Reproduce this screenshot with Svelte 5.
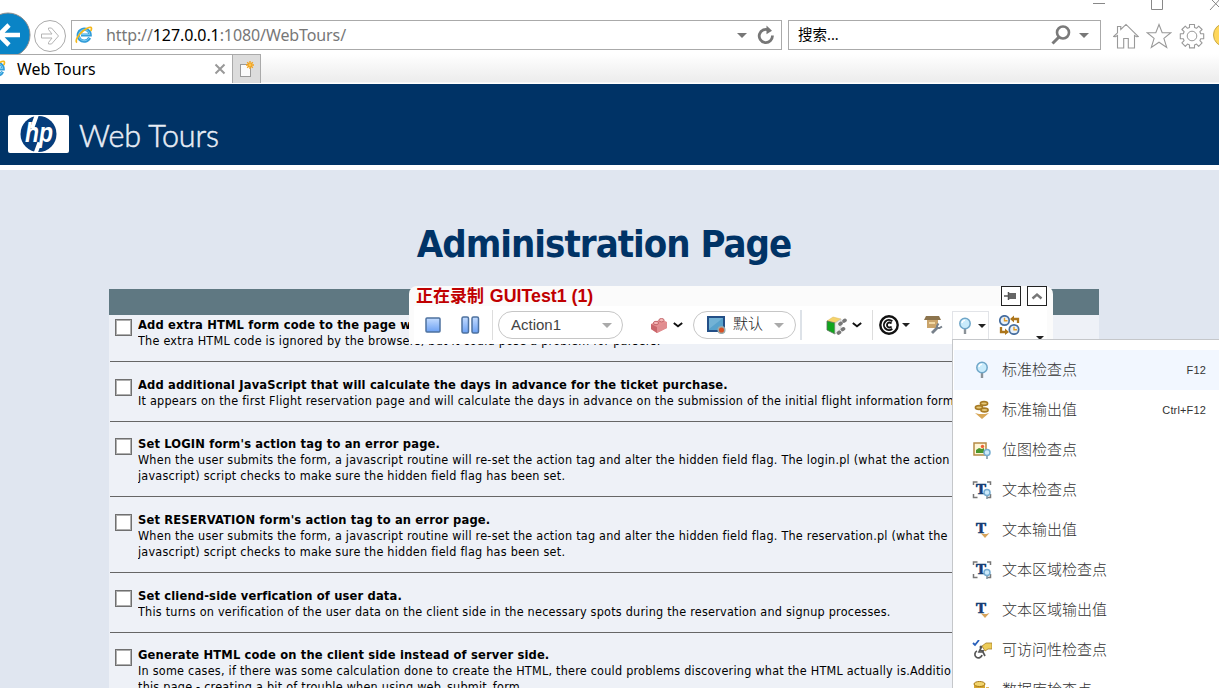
<script>
  const options = [
    { title: 'Add extra HTML form code to the page w', lines: ['The extra HTML code is ignored by the browsers, but it could pose a problem for parsers.'] },
    { title: 'Add additional JavaScript that will calculate the days in advance for the ticket purchase.', lines: ['It appears on the first Flight reservation page and will calculate the days in advance on the submission of the initial flight information form'] },
    { title: "Set LOGIN form's action tag to an error page.", lines: ['When the user submits the form, a javascript routine will re-set the action tag and alter the hidden field flag. The login.pl (what the action', 'javascript) script checks to make sure the hidden field flag has been set.'] },
    { title: "Set RESERVATION form's action tag to an error page.", lines: ['When the user submits the form, a javascript routine will re-set the action tag and alter the hidden field flag. The reservation.pl (what the', 'javascript) script checks to make sure the hidden field flag has been set.'] },
    { title: 'Set cliend-side verfication of user data.', lines: ['This turns on verification of the user data on the client side in the necessary spots during the reservation and signup processes.'] },
    { title: 'Generate HTML code on the client side instead of server side.', lines: ['In some cases, if there was some calculation done to create the HTML, there could problems discovering what the HTML actually is.Additio', 'this page - creating a bit of trouble when using web_submit_form.'] }
  ];
  const menu = [
    { icon: 'pin', label: '标准检查点', key: 'F12' },
    { icon: 'coins', label: '标准输出值', key: 'Ctrl+F12' },
    { icon: 'bitmap', label: '位图检查点' },
    { icon: 'textcheck', label: '文本检查点' },
    { icon: 'textout', label: '文本输出值' },
    { icon: 'textcheck', label: '文本区域检查点' },
    { icon: 'textout', label: '文本区域输出值' },
    { icon: 'access', label: '可访问性检查点' },
    { icon: 'db', label: '数据库检查点' }
  ];
</script>

{#snippet ie()}
  <svg class="ie" width="18" height="18" viewBox="0 0 18 18">
    <path d="M14.600 11.800A6 6 0 1 1 15.200 9H6" fill="none" stroke="#2f9bd8" stroke-width="3.200" />
    <path d="M14.200 11.800A5.600 5.600 0 1 1 14.800 8.600H6" fill="none" stroke="#7ccdf3" stroke-width="1" />
    <path d="M2 16.600C-.5 15 3.500 8.500 8 5s8.500-5 8.500-2.500c0 1-.3 1.800-.8 2.700" fill="none" stroke="#f4b81c" stroke-width="1.700" />
  </svg>
{/snippet}

{#snippet pin()}
  <path d="M9 11v6" stroke="#8b9298" stroke-width="2.400" />
  <circle cx="9" cy="6.500" r="5.200" fill="#c9ebfb" stroke="#6fa6c8" stroke-width="1.500" />
  <path d="M6 6a3 3 0 0 1 3-2.600" stroke="#fff" stroke-width="1.400" fill="none" />
{/snippet}

{#snippet chevron()}
  <svg width="10" height="6" viewBox="0 0 10 6"><path d="M.8 1 5 4.300 9.200 1" fill="none" stroke="#111" stroke-width="1.900" /></svg>
{/snippet}

{#snippet smallpin()}
  <path d="M14 14v4" stroke="#8196a2" stroke-width="1.600" />
  <circle cx="14" cy="11.500" r="3" fill="#cdeafa" stroke="#75acd0" stroke-width="1.500" />
{/snippet}

<div class="page">
  <header class="chrome">
    <div class="toolbar">
      <svg class="back" width="31" height="54" viewBox="0 0 31 54">
        <circle cx="8" cy="35" r="22" fill="#0a84c6" stroke="#8b8b8b" />
        <path d="M20 35H1M9 25-1 35l10 10" fill="none" stroke="#fff" stroke-width="4.600" />
      </svg>
      <svg class="forward" width="34" height="34" viewBox="0 0 34 34">
        <circle cx="17" cy="17" r="15.500" fill="#fff" stroke="#aaa" />
        <path d="M8.500 15H19l-3.500-4.500V9h3l7 8-7 8h-3v-1.500L19 19H8.500z" fill="none" stroke="#b4b4b4" />
      </svg>
      <div class="address">
        {@render ie()}
        <span class="url">http://<b>127.0.0.1</b>:1080/WebTours/</span>
        <i class="down"></i>
        <svg class="reload" width="18" height="20" viewBox="0 0 18 20">
          <path d="M15.400 10.500A6.600 6.600 0 1 1 12 5.200" fill="none" stroke="#777" stroke-width="2.800" />
          <path d="M9.500.500 15 5.700 9.500 9.200z" fill="#777" />
        </svg>
      </div>
      <div class="search">
        <span>搜索...</span>
        <svg width="20" height="20" viewBox="0 0 20 20"><circle cx="12" cy="7.500" r="6" fill="none" stroke="#7a7a7a" stroke-width="2.600" /><path d="M8 12l-6.500 6.500" stroke="#7a7a7a" stroke-width="3" /></svg>
        <i class="down"></i>
      </div>
      <div class="tools">
        <svg width="26" height="26" viewBox="0 0 26 26"><path d="M.7 13.500 4.500 9.800V3.500h3.300v3L13 1.400l12.300 12.100-1.800.2-2-1.200V25h-6.200v-9.500h-4.600V25H4.500V12.500l-2 1.200z" fill="none" stroke="#999" stroke-width="1.100" /></svg>
        <svg width="26" height="26" viewBox="0 0 26 26"><path d="m13 1.500 3.200 8.300h8.600l-6.900 5.600 2.800 9L13 19.200l-7.700 5.200 2.800-9-6.900-5.600h8.600z" fill="none" stroke="#999" stroke-width="1.100" /></svg>
        <svg width="26" height="26" viewBox="0 0 26 26"><path d="M10.500 1.500h5v3l2 .8 2.200-2.200 3.400 3.400-2.200 2.200.8 2h3v5h-3l-.8 2 2.200 2.200-3.400 3.400-2.200-2.200-2 .8v3h-5v-3l-2-.8-2.200 2.200-3.400-3.400 2.200-2.200-.8-2h-3v-5h3l.8-2-2.200-2.200 3.400-3.400 2.200 2.200 2-.8z" fill="none" stroke="#999" stroke-width="1.100" stroke-linejoin="round" /><circle cx="13" cy="13" r="4.800" fill="none" stroke="#999" /></svg>
        <i class="smile"></i>
      </div>
      <svg class="window" width="130" height="12" viewBox="0 0 130 12"><path d="M4 3.500h12M62.500-2v11.500h11V-2M121-2l11 11M121 10l11-12" fill="none" stroke="#888" /></svg>
    </div>
    <div class="tabs">
      <div class="tab">
        {@render ie()}
        <span>Web Tours</span>
        <svg width="12" height="12" viewBox="0 0 12 12"><path d="m1.500 1.500 9 9m0-9-9 9" stroke="#999" stroke-width="2" /></svg>
      </div>
      <div class="newtab">
        <svg width="16" height="18" viewBox="0 0 16 18"><rect x="1.500" y="4.500" width="10" height="12" fill="#fafafa" stroke="#999" /><path d="M11 1v8M7 5h8M8.200 2.200l5.600 5.600M13.800 2.200 8.200 7.800" stroke="#f2a31d" stroke-width="1.400" /><circle cx="11" cy="5" r="1.400" fill="#ffc44a" /></svg>
      </div>
    </div>
  </header>

  <div class="banner">
    <svg width="62" height="38" viewBox="0 0 62 38">
      <rect width="61" height="38" rx="2" fill="#fff" />
      <circle cx="30.500" cy="19" r="18" fill="#063d7c" />
      <path d="m29-.5-5 14M27.500 38.500l4-11" stroke="#fff" stroke-width="4" />
      <text x="17" y="27" font-family="Liberation Sans" font-size="28" font-weight="bold" font-style="italic" fill="#fff" textLength="28" lengthAdjust="spacingAndGlyphs">hp</text>
    </svg>
    <span>Web Tours</span>
  </div>

  <main>
    <h1>Administration Page</h1>
    <div class="table">
      <div class="thead"></div>
      {#each options as option}
        <div class="option">
          <span class="box"></span>
          <div class="copy">
            <b>{option.title}</b>
            {#each option.lines as line}<p>{line}</p>{/each}
          </div>
        </div>
      {/each}
    </div>
  </main>

  <section class="recorder">
    <div class="rec-head">
      <strong>正在录制 <em>GUITest1 (1)</em></strong>
      <span class="rec-btn"><svg width="14" height="10" viewBox="0 0 14 10"><path d="M0 5h4M4.500 1v8" stroke="#555" stroke-width="1.500" /><rect x="5" y="2" width="7" height="6" fill="#666" /></svg></span>
      <span class="rec-btn"><svg width="12" height="8" viewBox="0 0 12 8"><path d="m1.500 6.500 4.500-4 4.500 4" fill="none" stroke="#777" stroke-width="2.400" /></svg></span>
    </div>
    <div class="rec-body">
      <svg class="stop" width="16" height="16" viewBox="0 0 16 16"><defs><linearGradient id="blue" x2="0" y2="1"><stop stop-color="#c4dcff" /><stop offset="1" stop-color="#6ba0f3" /></linearGradient></defs><rect x="1" y="1" width="14" height="14" rx="1" fill="url(#blue)" stroke="#4d719f" stroke-width="1.500" /></svg>
      <svg class="pause" width="19" height="18" viewBox="0 0 19 18"><rect x="1" y="1" width="6.500" height="16" rx="1.500" fill="url(#blue)" stroke="#4d719f" stroke-width="1.500" /><rect x="11" y="1" width="6.500" height="16" rx="1.500" fill="url(#blue)" stroke="#4d719f" stroke-width="1.500" /></svg>
      <i class="sep s1"></i>
      <div class="pill action"><span>Action1</span><i class="down"></i></div>
      <svg class="brick" width="18" height="17" viewBox="0 0 18 17"><path d="m1 7 10-5 6 3v6L7 16l-6-4z" fill="#e58f91" /><path d="m1 7 6 3v6l-6-4z" fill="#c9666b" /><path d="M7 10v6l10-5V5z" fill="#e08d90" /><ellipse cx="6" cy="6" rx="2.600" ry="1.700" fill="#f4b7b7" stroke="#c4686c" /><ellipse cx="11.500" cy="3.200" rx="2.600" ry="1.700" fill="#f4b7b7" stroke="#c4686c" /></svg>
      <span class="chev c1">{@render chevron()}</span>
      <div class="pill mode">
        <svg width="20" height="18" viewBox="0 0 20 18"><rect x="1" y="1" width="16" height="14" fill="#58a2cc" stroke="#234f87" stroke-width="2" /><path d="M2 2h14L2 13z" fill="#83bddb" opacity=".6" /><circle cx="14.500" cy="14" r="3.300" fill="#d95124" stroke="#9aa" stroke-width="1.500" /></svg>
        <span>默认</span><i class="down"></i>
      </div>
      <i class="sep wide s2"></i>
      <svg class="cube" width="21" height="19" viewBox="0 0 21 19"><path d="m1 5 6-4 8 2-5 4z" fill="#f6d36a" stroke="#d9b65a" stroke-width=".5" /><path d="m1 5 8 2v11l-8-4z" fill="#11a51d" stroke="#59705a" stroke-width=".8" /><path d="m9 7 6-4v10l-6 5z" fill="#eee" stroke="#bbb" stroke-width=".7" /><path d="m14 8 1-.7M18 5l1-.7M12.500 17l1-.7M16.500 13.500l1-.7" stroke="#777" stroke-width="3.600" stroke-linecap="round" /></svg>
      <span class="chev c2">{@render chevron()}</span>
      <i class="sep s3"></i>
      <svg class="target" width="20" height="20" viewBox="0 0 20 20"><circle cx="10" cy="10" r="8.700" fill="none" stroke="#111" stroke-width="2.400" /><path d="M13.300 6.300a5 5 0 1 0 0 7.400M12.500 8.500a2.500 2.500 0 1 0 0 3" fill="none" stroke="#111" stroke-width="1.900" /></svg>
      <i class="down black d1"></i>
      <svg class="boxtool" width="19" height="18" viewBox="0 0 19 18"><path d="M2 0h13l2 4H0z" fill="#8c744d" /><path d="M3 4h11v8H3z" fill="#caa46b" /><path d="M5 6h6v2H5z" fill="#f1d8a5" /><path d="m8 17 6-6" stroke="#77808a" stroke-width="2.800" /><path d="M14.500 7.500 13 10v2h2.500l2.500-1.500" stroke="#77808a" stroke-width="2" fill="none" /></svg>
      <div class="checkbtn"><svg width="18" height="18" viewBox="0 0 18 18">{@render pin()}</svg><i class="down black"></i></div>
      <svg class="clocks" width="21" height="20" viewBox="0 0 21 20"><g fill="#e6f0fa" stroke="#476e9f" stroke-width="1.700"><circle cx="5.500" cy="5.500" r="4.700" /><circle cx="15" cy="14.500" r="4.700" /></g><path d="M5.500 2.800v3h3M15 11.800v3h3" stroke="#e39c24" stroke-width="1.400" fill="none" /><path d="M19 8V4h-5M2 12v5h5" stroke="#ad761b" stroke-width="2.300" fill="none" /><path d="m15 .5-4 3.500 4 3.500zM6 13.500l4 3.500-4 3z" fill="#ad761b" /></svg>
      <i class="down black more"></i>
    </div>
  </section>

  <nav class="menu">
    {#each menu as item, i}
      <div class="item" class:active={i === 0}>
        <svg width="20" height="20" viewBox="-1 -1 20 20">
          {#if item.icon === 'pin'}
            {@render pin()}
          {:else if item.icon === 'coins'}
            <g fill="#e6c878" stroke="#a77b26" stroke-width="1.600"><ellipse cx="11" cy="2.500" rx="3.600" ry="1.900" /><ellipse cx="6" cy="6.500" rx="3.600" ry="1.900" /><ellipse cx="11.500" cy="9" rx="3.600" ry="1.900" /></g><path d="m2 12 4 1h6l4-1-7 6z" fill="#d8a756" />
          {:else if item.icon === 'bitmap'}
            <rect x="1" y="2" width="12" height="12" fill="#fff5d5" stroke="#b58b46" stroke-width="1.500" /><path d="M3 11V9l3-2 3 1 2-1v5H3z" fill="#49962c" /><circle cx="9.500" cy="5.500" r="1.700" fill="#ef6338" />{@render smallpin()}
          {:else if item.icon === 'textcheck'}
            <path d="M.5 4V1h4M14 1h3.500v3M.5 13v3.500h4M14 16.500h3.500V13" fill="none" stroke="#777" stroke-width="1.500" /><text x="3" y="12.500" class="tee">T</text>{@render smallpin()}
          {:else if item.icon === 'textout'}
            <text x="3" y="12" class="tee">T</text><path d="m7.500 12 3 1h3l3-1-4.500 5z" fill="#d8a45a" />
          {:else if item.icon === 'access'}
            <path d="m0 2 2 2 4-5" fill="none" stroke="#285fba" stroke-width="1.800" /><circle cx="8" cy="6" r="1.500" fill="#555" /><path d="m8 7-2 4h4l2 4M7 9l4 1M4 10a3.600 3.600 0 1 0 5 4" fill="none" stroke="#555" stroke-width="1.700" /><path d="m9 5 4-3h6v6h-4l-3 2z" fill="#edcc58" stroke="#a6802c" stroke-width=".8" />
          {:else}
            <path d="M1 2v14h11V2" fill="#d8a72e" /><ellipse cx="6.500" cy="3" rx="5.500" ry="2.500" fill="#f2d46c" stroke="#a77818" /><path d="M13 6h3v8h-3z" fill="#e2b65b" />
          {/if}
        </svg>
        <span>{item.label}</span>
        {#if item.key}<kbd>{item.key}</kbd>{/if}
      </div>
    {/each}
  </nav>
</div>

<style>
  .page { position: relative; width: 1219px; height: 688px; overflow: hidden; background: #e0e6f0; font-family: 'Noto Sans', 'Noto Sans CJK SC', sans-serif; }
  .page :global(svg) { flex: none; display: block; }
  .page * { box-sizing: border-box; }
  .chrome { height: 84px; background: linear-gradient(#fff 54px, #ececec 82px, #fff 83px); }
  .toolbar { display: flex; height: 54px; position: relative; }
  .forward { margin: 19px 0 0 2px; }
  .address, .search { display: flex; flex: none; align-items: center; height: 30px; margin-top: 20px; border: 1px solid #aaa; background: #fff; }
  .address { width: 711px; margin-left: 4px; padding: 0 6px 0 3px; }
  .url { margin-left: 13px; font-size: 16px; color: #777; flex: 1; white-space: nowrap; letter-spacing: -.1px; }
  .url b { font-weight: 400; color: #000; }
  .down { width: 0; height: 0; flex: none; border: 5px solid transparent; border-top-color: #777; border-bottom: 0; }
  .reload { margin-left: 10px; }
  .search { width: 313px; margin-left: 6px; padding: 0 11px 0 9px; font-size: 14.500px; }
  .search span { flex: 1; line-height: 20px; margin-top: -2px; }
  .search svg { margin-right: 8px; }
  .tools { display: flex; gap: 7px; margin: 23px 0 0 12px; }
  .smile { width: 24px; height: 24px; border-radius: 50%; background: #ffd75a; border: 1px solid #c8a94a; margin-left: 1px; flex: none; }
  .window { position: absolute; right: 0; top: 0; }
  .tabs { display: flex; height: 30px; }
  .tab { display: flex; align-items: center; width: 232px; height: 29px; background: #fff; border-top: 1px solid #aaa; font-size: 15.900px; padding-right: 6px; }
  .tab :global(.ie) { margin: 0 11px 0 -12px; }
  .tab span { flex: 1; }
  .newtab { width: 29px; height: 29px; border: 1px solid #aaa; border-bottom: 0; background: #dcdcdc; padding: 5px 0 0 6px; }
  .banner { height: 86px; background: #003366; border-bottom: 5px solid #fff; display: flex; padding: 31px 0 0 8px; color: #e8edf5; }
  .banner span { font: 300 30.500px/40px Lato, sans-serif; margin: 0 0 0 9px; letter-spacing: -.1px; -webkit-text-stroke: .5px #e8edf5; }
  main { padding-left: 109px; }
  h1 { margin: 0; padding: 49px 0 0; width: 990px; height: 119px; text-align: center; font: bold 38px/50px 'DejaVu Sans Condensed', 'DejaVu Sans', sans-serif; font-stretch: condensed; color: #003366; letter-spacing: -1px; }
  .table { width: 990px; background: #eef1f7; }
  .thead { height: 26px; background: #5f7882; }
  .option { display: flex; padding: 2px 0 12px 6px; border-bottom: 1px solid #666; margin: 0 1px; }
  .option + .option { padding-top: 14.400px; }
  .box { width: 17px; height: 17px; border: 1.500px solid #707070; background: #fff; flex: none; margin: 2px 6px 0 -1px; outline: 1px solid #b0b0b0; outline-offset: -2px; }
  .copy { white-space: nowrap; overflow: hidden; font: 12.500px/16.100px 'DejaVu Sans Condensed', 'DejaVu Sans', sans-serif; font-stretch: condensed; letter-spacing: .235px; color: #000; }
  .copy b { display: block; font-size: 12.800px; letter-spacing: .16px; }
  .copy p { margin: 0; }
  .recorder { position: absolute; left: 409px; top: 286px; width: 644px; height: 58px; border-radius: 8px 8px 0 0; background: #fbfbfb; }
  .rec-head { height: 20px; display: flex; padding: 0 6px 0 7px; gap: 6px; }
  .rec-head strong { flex: 1; color: #c00000; font: bold 17px/18px 'Noto Sans CJK SC', sans-serif; }
  .rec-head em { font: bold 17.800px/18px 'Liberation Sans', sans-serif; margin-left: 2px; }
  .rec-btn { width: 20px; height: 20px; border: 1px solid #222; background: #fff; display: grid; place-items: center; }
  .rec-body { position: relative; height: 38px; margin: 0 6px 0 5px; background: #fff; display: flex; align-items: center; }
  .stop { margin-left: 11px; }
  .pause { margin-left: 20px; }
  .sep { width: 1px; height: 30px; background: #ddd; flex: none; }
  .sep.wide { width: 2px; background: #dde2e8; }
  .s1 { margin: 0 5px 0 12px; }
  .pill { height: 28px; border: 1.500px solid #c6c6c6; border-radius: 14px; display: flex; align-items: center; flex: none; font-size: 15px; color: #444; }
  .pill .down { border-top-color: #aaa; }
  .action { width: 125px; padding: 0 10px 0 12px; font-family: 'Liberation Sans', sans-serif; }
  .action span { flex: 1; margin-top: -1px; }
  .brick { margin-left: 27px; }
  .c1 { margin: 0 10px 0 5px; }
  .mode { width: 103px; padding: 0 11px 0 13px; }
  .mode span { flex: 1; margin: -4px 0 0 6px; white-space: nowrap; font: 300 15px/20px 'Noto Sans CJK SC', sans-serif; color: #222; }
  .s2 { margin-left: 4px; }
  .cube { margin-left: 24px; }
  .c2 { margin: 0 10px 0 5px; }
  .target { margin-left: 6px; }
  .down.black { border-top-color: #222; border-width: 4px 4px 0; }
  .d1 { margin-left: 3px; }
  .boxtool { margin-left: 14px; }
  .checkbtn { width: 37px; height: 28px; margin: 0 0 0 9px; border: 1px solid #e2e4e8; border-bottom: 0; display: flex; align-items: center; gap: 4px; padding-left: 3px; }
  .clocks { margin-left: 10px; }
  .more { position: absolute; right: 7px; top: 30px; margin-right: -4px; }
  .menu { position: absolute; left: 952px; top: 339px; width: 267px; height: 349px; overflow: hidden; background: #fff; border: 1px solid #c5c7ca; border-width: 1px 0 0 1px; padding-top: 10px; }
  .item { height: 40px; display: flex; align-items: center; padding: 0 13px 0 18px; margin-left: 1px; font: 15px/20px 'Noto Sans CJK SC', sans-serif; font-weight: 300; color: #333; }
  .item.active { background: #f2f7ff; }
  .item span { margin: -2px 0 0 10px; flex: 1; }
  kbd { font: 11px 'Liberation Sans', sans-serif; color: #333; letter-spacing: .15px; }
  .tee { font: bold 15px 'Liberation Serif', serif; fill: #153d73; stroke: #153d73; stroke-width: .7px; }
</style>
